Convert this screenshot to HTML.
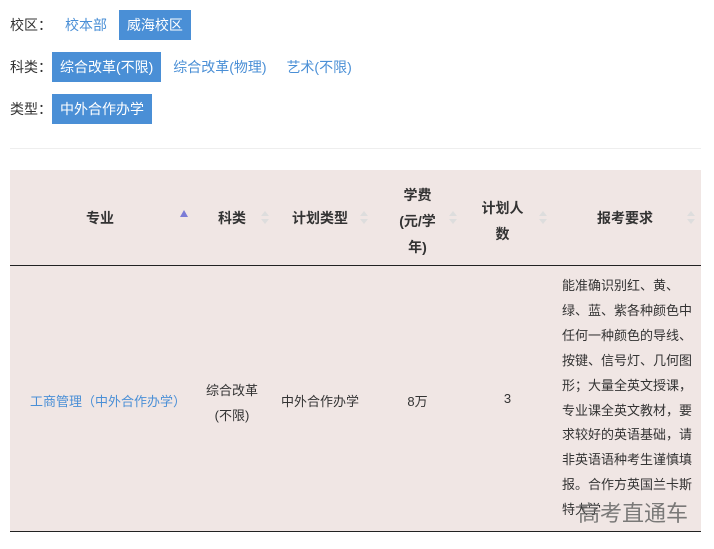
<!DOCTYPE html>
<html><head><meta charset="utf-8"><style>
body{margin:0;background:#fff;font-family:"Liberation Sans","Noto Sans CJK SC",sans-serif;font-size:14px;color:#333;width:714px;height:549px;overflow:hidden;position:relative}
.row{position:absolute;left:10px;height:30px;line-height:30px;white-space:nowrap}
.row span{display:inline-block;padding:0 8px;color:#4a8fd6}
.row span.on{background:#4a8fd6;color:#fff}
.row b{font-weight:normal;color:#333;margin-right:0px}
.sep{position:absolute;left:10px;top:148px;width:691px;height:1px;background:#eee}
.tbl{position:absolute;left:10px;top:170px;width:691px;height:362px;background:#f0e6e4}
.hd{position:absolute;top:0;height:95px;border-bottom:1px solid #222;width:691px}
.c{position:absolute;text-align:center;font-size:13px}
.h{font-weight:bold;font-size:14px;color:#333}
.ar{position:absolute;width:0;height:0;border-left:4px solid transparent;border-right:4px solid transparent}
.bot{position:absolute;left:0;top:361px;width:691px;height:1px;background:#222}
.req{position:absolute;left:552px;top:104px;line-height:24.9px;font-size:13px;letter-spacing:0px;white-space:nowrap}
</style></head><body>
<div class="row" style="top:10px"><b>校区：</b><span style="margin-left:5px">校本部</span> <span class="on">威海校区</span></div>
<div class="row" style="top:52px;left:8px"><b style="margin-left:2px">科类：</b><span class="on">综合改革(不限)</span> <span>综合改革(物理)</span> <span>艺术(不限)</span></div>
<div class="row" style="top:94px;left:8px"><b style="margin-left:2px">类型：</b><span class="on">中外合作办学</span></div>
<div class="sep"></div>
<div class="tbl">
<div class="hd"></div>
<div class="c h" style="left:60px;width:60px;top:38px">专业</div>
<div class="ar" style="left:170px;top:40px;border-bottom:7px solid #7b7bd6"></div>
<div class="c h" style="left:200px;width:44px;top:38px">科类</div>
<div class="c h" style="left:270px;width:80px;top:38px">计划类型</div>
<div class="c h" style="left:380px;width:55px;top:12px;line-height:26px">学费<br>(元/学<br>年)</div>
<div class="c h" style="left:465px;width:55px;top:25px;line-height:26px">计划人<br>数</div>
<div class="c h" style="left:575px;width:80px;top:38px">报考要求</div>
<div class="ar" style="left:251px;top:41px;border-bottom:5px solid #ddd"></div><div class="ar" style="left:251px;top:49px;border-top:5px solid #ddd"></div>
<div class="ar" style="left:350px;top:41px;border-bottom:5px solid #ddd"></div><div class="ar" style="left:350px;top:49px;border-top:5px solid #ddd"></div>
<div class="ar" style="left:439px;top:41px;border-bottom:5px solid #ddd"></div><div class="ar" style="left:439px;top:49px;border-top:5px solid #ddd"></div>
<div class="ar" style="left:529px;top:41px;border-bottom:5px solid #ddd"></div><div class="ar" style="left:529px;top:49px;border-top:5px solid #ddd"></div>
<div class="ar" style="left:677px;top:41px;border-bottom:5px solid #ddd"></div><div class="ar" style="left:677px;top:49px;border-top:5px solid #ddd"></div>
<div class="c" style="width:170px;top:221px;color:#4a8fd6;text-align:left;left:20px">工商管理（中外合作办学）</div>
<div class="c" style="left:190px;width:64px;top:208px;line-height:25px">综合改革<br>(不限)</div>
<div class="c" style="left:270px;width:80px;top:221px">中外合作办学</div>
<div class="c" style="left:380px;width:55px;top:221px">8万</div>
<div class="c" style="left:470px;width:55px;top:221px">3</div>
<div class="req">能准确识别红、黄、<br>绿、蓝、紫各种颜色中<br>任何一种颜色的导线、<br>按键、信号灯、几何图<br>形；大量全英文授课，<br>专业课全英文教材，要<br>求较好的英语基础，请<br>非英语语种考生谨慎填<br>报。合作方英国兰卡斯<br>特大学</div>
<div class="c" style="left:568px;top:326px;font-size:22px;color:#666;opacity:.85;white-space:nowrap">高考直通车</div>
<div class="bot"></div>
</div>
</body></html>
